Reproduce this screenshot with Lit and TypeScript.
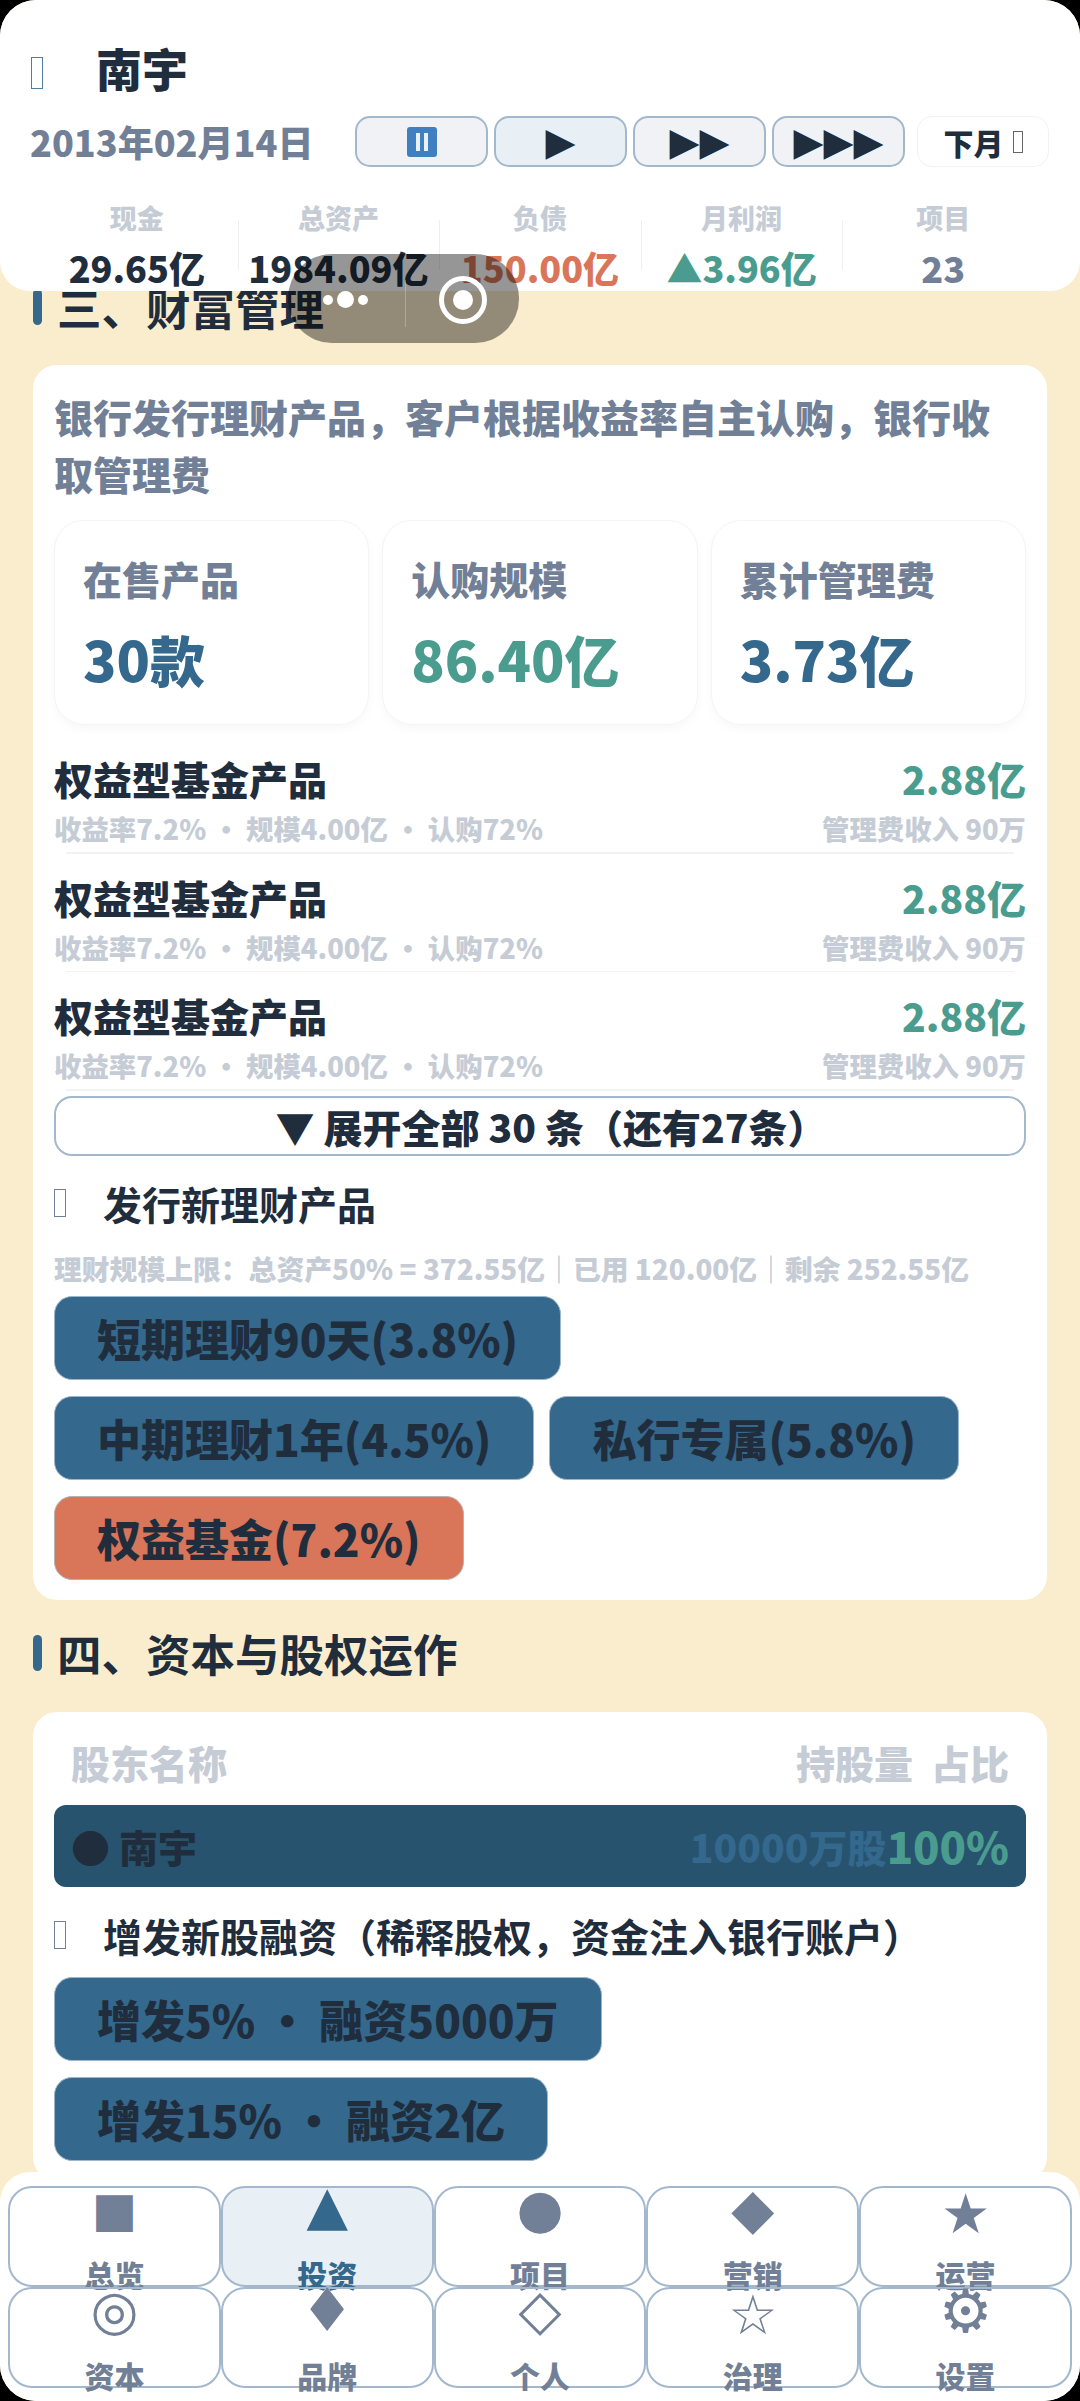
import { LitElement, html, css } from "lit";
import { customElement } from "lit/decorators.js";

interface Tile {
  glyph: string;
  size: number;
  label: string;
  on?: boolean;
  cls?: string;
}

const TILES: Tile[] = [
  { glyph: "■", size: 48, label: "总览" },
  { glyph: "▲", size: 54, label: "投资", on: true, cls: "up" },
  { glyph: "●", size: 54, label: "项目" },
  { glyph: "◆", size: 56, label: "营销" },
  { glyph: "★", size: 55, label: "运营", cls: "star" },
  { glyph: "◎", size: 55, label: "资本" },
  { glyph: "♦", size: 60, label: "品牌" },
  { glyph: "◇", size: 56, label: "个人" },
  { glyph: "☆", size: 55, label: "治理", cls: "star" },
  { glyph: "⚙", size: 60, label: "设置", cls: "gear" },
];

@customElement("app-root")
export class AppRoot extends LitElement {
  static styles = css`
    :host {
      display: block;
      width: 1080px;
      height: 2401px;
      background: #000;
      font-family: "Noto Sans CJK SC", "Noto Sans", sans-serif;
      color: #1f2d3d;
      font-weight: 900;
    }
    .screen {
      position: relative;
      height: 2401px;
      overflow: hidden;
      border-radius: 36px;
      background: #faedcd;
    }
    .top {
      position: absolute;
      left: 0;
      right: 0;
      top: 0;
      height: 291px;
      background: #fff;
      border-radius: 0 0 30px 30px;
      padding: 0 30px;
      box-sizing: border-box;
      z-index: 2;
    }
    .title {
      display: flex;
      align-items: center;
      height: 45px;
      padding-top: 44px;
      font-size: 46px;
    }
    .tofu-lg {
      width: 10px;
      height: 30px;
      border: 1.5px solid #4f7f9c;
      margin: 12px 53px 0 1px;
      flex: none;
    }
    .ctl {
      display: flex;
      align-items: center;
      margin-top: 27px;
    }
    .date {
      font-size: 36px;
      color: #718096;
      width: 325px;
      line-height: 51px;
    }
    .sp {
      width: 133px;
      height: 51px;
      box-sizing: border-box;
      border: 2px solid #a3b8cc;
      border-radius: 15px;
      background: #f0f2f6;
      margin-right: 6px;
      display: flex;
      align-items: center;
      justify-content: center;
      font-family: "DejaVu Sans", sans-serif;
      font-weight: 400;
      font-size: 39px;
      line-height: 51px;
      overflow: hidden;
    }
    .sp.on { background: #e8f0f5; }
    .next {
      margin-left: 6px;
      width: 132px;
      height: 51px;
      box-sizing: border-box;
      border: 1.5px solid #f2f2f2;
      border-radius: 15px;
      font-size: 30px;
      display: flex;
      align-items: center;
      justify-content: center;
      gap: 9px;
    }
    .tofu-sm {
      width: 8px;
      height: 20px;
      border: 1px solid #666;
    }
    .stats {
      display: grid;
      grid-template-columns: repeat(5, 1fr);
      margin: 33px 6px 0;
    }
    .stat {
      text-align: center;
      position: relative;
      height: 78px;
    }
    .stat + .stat::before {
      content: "";
      position: absolute;
      left: 0;
      top: 20px;
      height: 50px;
      width: 1px;
      background: #edf0f2;
    }
    .stat b {
      display: block;
      font-size: 27px;
      line-height: 36px;
      color: #c5ccd5;
    }
    .stat i {
      display: block;
      font-style: normal;
      font-size: 36px;
      line-height: 48px;
      margin-top: 7px;
      white-space: nowrap;
    }
    .capsule {
      position: absolute;
      left: 288px;
      top: 254px;
      width: 231px;
      height: 89px;
      border-radius: 44px;
      background: rgba(0, 0, 0, 0.41);
      z-index: 3;
    }
    .dots {
      position: absolute;
      left: 35px;
      top: 37px;
      display: flex;
      align-items: center;
      gap: 4px;
      height: 17px;
    }
    .dots span {
      width: 10px;
      height: 10px;
      border-radius: 50%;
      background: #fff;
    }
    .dots span:nth-child(2) {
      width: 17px;
      height: 17px;
    }
    .sep {
      position: absolute;
      left: 117px;
      top: 26px;
      height: 47px;
      width: 1px;
      background: rgba(255, 255, 255, 0.25);
    }
    .ring {
      position: absolute;
      left: 151px;
      top: 22px;
      width: 48px;
      height: 48px;
      border: 5px solid #fff;
      border-radius: 50%;
      box-sizing: border-box;
    }
    .ring::after {
      content: "";
      position: absolute;
      inset: 9px;
      border-radius: 50%;
      background: #fff;
    }
    .page {
      padding: 283px 33px 0;
    }
    h2 {
      margin: 0;
      font-size: 44.5px;
      line-height: 48px;
      display: flex;
      align-items: center;
      gap: 15px;
    }
    h2::before {
      content: "";
      width: 9px;
      height: 36px;
      border-radius: 5px;
      background: #34688c;
    }
    .card {
      background: #fff;
      border-radius: 24px;
      padding: 23px 21px 20px;
      margin-top: 34px;
    }
    .desc {
      color: #718096;
      font-size: 39px;
      line-height: 57px;
    }
    .kpis {
      display: grid;
      grid-template-columns: repeat(3, 1fr);
      gap: 13px;
      margin-top: 18px;
    }
    .kpi {
      height: 205px;
      box-sizing: border-box;
      border: 1.5px solid #f3f4f5;
      border-radius: 30px;
      padding: 30px 28px;
      box-shadow: 0 4px 10px rgba(0, 0, 0, 0.03);
    }
    .kpi b {
      display: block;
      font-size: 39px;
      line-height: 54px;
      color: #718096;
    }
    .kpi i {
      display: block;
      font-style: normal;
      font-size: 55px;
      line-height: 78px;
      margin-top: 14px;
    }
    .blue { color: #34688c; }
    .green { color: #4a9d8e; }
    .red { color: #d97559; }
    .grey { color: #718096; }
    .rows { margin-top: 10px; }
    .row {
      height: 118.5px;
      box-sizing: border-box;
      position: relative;
      padding-top: 16px;
    }
    .row::after {
      content: "";
      position: absolute;
      left: 12px;
      right: 12px;
      bottom: 0;
      height: 1.5px;
      background: #f2f3f4;
    }
    .rl {
      display: flex;
      justify-content: space-between;
      align-items: center;
    }
    .rl b { font-size: 39px; line-height: 54px; }
    .rl em {
      font-style: normal;
      font-size: 27.4px;
      line-height: 36px;
      color: #c5ccd5;
    }
    .rl + .rl { margin-top: 5px; }
    .more {
      margin-top: 5px;
      height: 60px;
      border: 2px solid #a3b8cc;
      border-radius: 18px;
      box-sizing: border-box;
      display: flex;
      align-items: center;
      justify-content: center;
      font-size: 39px;
      padding-left: 22px;
    }
    h3 {
      margin: 0;
      font-size: 39px;
      line-height: 54px;
      display: flex;
      align-items: center;
    }
    .tofu-h {
      width: 10px;
      height: 26px;
      border: 1.5px solid #718096;
      margin-right: 37px;
      flex: none;
    }
    .sub1 { margin-top: 20px; }
    .hint {
      font-size: 27.8px;
      line-height: 42px;
      color: #c5ccd5;
      margin-top: 17px;
      white-space: nowrap;
    }
    .btns {
      display: flex;
      flex-direction: column;
      gap: 16px;
      margin-top: 7px;
    }
    .brow {
      display: flex;
      gap: 15px;
    }
    .btn {
      height: 84px;
      box-sizing: border-box;
      border: 1.5px solid #9cb6cc;
      background: #34688c;
      border-radius: 18px;
      padding: 0 42px;
      display: flex;
      align-items: center;
      font-size: 44px;
      white-space: nowrap;
    }
    .btn.hot { background: #d97559; border-color: #b3b3b3; }
    .sec2 { margin-top: 29px; }
    .card2 { margin-top: 35px; }
    .shead {
      display: flex;
      padding: 0 17px;
      gap: 18px;
      font-size: 39px;
      line-height: 54px;
      color: #c5ccd5;
    }
    .shead .nm { flex: 1; }
    .sh {
      margin-top: 16px;
      height: 82px;
      background: #27536f;
      border-radius: 12px;
      display: flex;
      align-items: center;
      padding: 0 17px;
      font-size: 39px;
    }
    .sh .nm { flex: 1; }
    .sh .green { font-size: 43.5px; }
    .sub2 { margin-top: 21px; }
    .card2 .btns { margin-top: 15px; }
    .nav {
      position: absolute;
      left: 0;
      right: 0;
      bottom: 0;
      height: 229px;
      background: #fff;
      border-radius: 30px 30px 0 0;
      padding: 14px 8px 0;
      box-sizing: border-box;
      display: grid;
      grid-template-columns: repeat(5, 1fr);
      grid-template-rows: 101px 101px;
      z-index: 2;
    }
    .tile {
      box-sizing: border-box;
      border: 2px solid #a3b8cc;
      border-radius: 24px;
      text-align: center;
      color: #718096;
      height: 101px;
      font-size: 30px;
      line-height: 36px;
    }
    .tile.on { background: #e8f0f5; color: #34688c; }
    .tile span {
      display: block;
      font-family: "DejaVu Sans", sans-serif;
      font-weight: 400;
      height: 60px;
      line-height: 60px;
      margin: -9px 0 17px;
    }
    .tile span.star { transform: translateY(5px); }
    .tile span.up { transform: translateY(-3px); }
    .tile span.gear { font-weight: 700; transform: translateY(1px); }
  `;

  private row() {
    return html`<div class="row">
      <div class="rl"><b>权益型基金产品</b><b class="green">2.88亿</b></div>
      <div class="rl"><em>收益率7.2% · 规模4.00亿 · 认购72%</em><em>管理费收入 90万</em></div>
    </div>`;
  }

  render() {
    return html`
      <div class="screen">
        <div class="top">
          <div class="title"><div class="tofu-lg"></div>南宇</div>
          <div class="ctl">
            <div class="date">2013年02月14日</div>
            <div class="sp"><svg width="30" height="30" viewBox="0 0 30 30"><rect width="30" height="30" rx="3" fill="#4080c0"/><rect x="9" y="6" width="4" height="18" fill="#e8f0f8"/><rect x="17" y="6" width="4" height="18" fill="#e8f0f8"/></svg></div>
            <div class="sp on">▶</div>
            <div class="sp">▶▶</div>
            <div class="sp">▶▶▶</div>
            <div class="next">下月<div class="tofu-sm"></div></div>
          </div>
          <div class="stats">
            <div class="stat"><b>现金</b><i>29.65亿</i></div>
            <div class="stat"><b>总资产</b><i>1984.09亿</i></div>
            <div class="stat"><b>负债</b><i class="red">150.00亿</i></div>
            <div class="stat"><b>月利润</b><i class="green">▲3.96亿</i></div>
            <div class="stat"><b>项目</b><i class="grey">23</i></div>
          </div>
        </div>
        <div class="capsule"><div class="dots"><span></span><span></span><span></span></div><div class="sep"></div><div class="ring"></div></div>
        <div class="page">
          <h2>三、财富管理</h2>
          <div class="card">
            <div class="desc">银行发行理财产品，客户根据收益率自主认购，银行收取管理费</div>
            <div class="kpis">
              <div class="kpi"><b>在售产品</b><i class="blue">30款</i></div>
              <div class="kpi"><b>认购规模</b><i class="green">86.40亿</i></div>
              <div class="kpi"><b>累计管理费</b><i class="blue">3.73亿</i></div>
            </div>
            <div class="rows">${this.row()}${this.row()}${this.row()}</div>
            <div class="more">▼ 展开全部 30 条（还有27条）</div>
            <h3 class="sub1"><div class="tofu-h"></div>发行新理财产品</h3>
            <div class="hint">理财规模上限：总资产50% = 372.55亿｜已用 120.00亿｜剩余 252.55亿</div>
            <div class="btns">
              <div class="brow"><div class="btn">短期理财90天(3.8%)</div></div>
              <div class="brow"><div class="btn">中期理财1年(4.5%)</div><div class="btn">私行专属(5.8%)</div></div>
              <div class="brow"><div class="btn hot">权益基金(7.2%)</div></div>
            </div>
          </div>
          <h2 class="sec2">四、资本与股权运作</h2>
          <div class="card card2">
            <div class="shead"><span class="nm">股东名称</span><span>持股量</span><span>占比</span></div>
            <div class="sh"><span class="nm">● 南宇</span><span class="blue">10000万股</span><span class="green">100%</span></div>
            <h3 class="sub2"><div class="tofu-h"></div>增发新股融资（稀释股权，资金注入银行账户）</h3>
            <div class="btns">
              <div class="brow"><div class="btn">增发5% · 融资5000万</div></div>
              <div class="brow"><div class="btn">增发15% · 融资2亿</div></div>
            </div>
          </div>
        </div>
        <div class="nav">
          ${TILES.map(
            (t) => html`<div class="tile ${t.on ? "on" : ""}"><span class=${t.cls ?? ""} style="font-size:${t.size}px">${t.glyph}</span>${t.label}</div>`
          )}
        </div>
      </div>
    `;
  }
}
